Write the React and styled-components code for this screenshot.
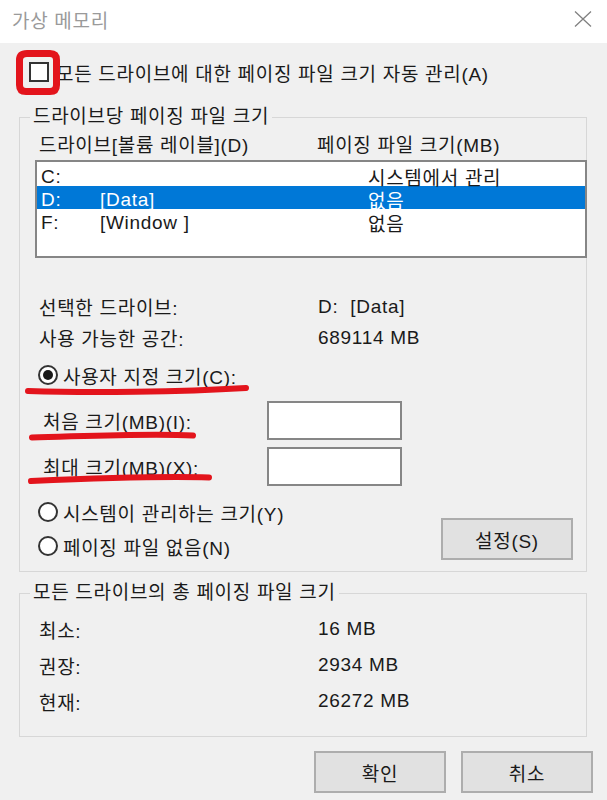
import React from 'react'
import styled, { createGlobalStyle } from 'styled-components'

const drives = [
  { letter: 'C:', label: '', size: '시스템에서 관리' },
  { letter: 'D:', label: '[Data]', size: '없음', selected: true },
  { letter: 'F:', label: '[Window ]', size: '없음' },
]

const totals = [
  ['최소:', '16 MB'],
  ['권장:', '2934 MB'],
  ['현재:', '26272 MB'],
]

function App() {
  return (
    <>
      <GlobalStyle />
      <Window>
        <TitleBar>
          <Title>가상 메모리</Title>
          <CloseIcon width="18" height="16" viewBox="0 0 18 16">
            <path d="M1 0.5 L17 15.5 M17 0.5 L1 15.5" />
          </CloseIcon>
        </TitleBar>

        <AutoRow>
          <CheckBox />
          <span>모든 드라이브에 대한 페이징 파일 크기 자동 관리(A)</span>
        </AutoRow>

        <GroupBox $top={18} $bottom={8}>
          <Legend>드라이브당 페이징 파일 크기</Legend>
          <ColumnHeader>
            <span>드라이브[볼륨 레이블](D)</span>
            <span>페이징 파일 크기(MB)</span>
          </ColumnHeader>
          <ListBox>
            {drives.map((d) => (
              <DriveRow key={d.letter} $selected={d.selected}>
                <span>{d.letter}</span>
                <span>{d.label}</span>
                <span>{d.size}</span>
              </DriveRow>
            ))}
          </ListBox>

          <InfoGrid $top={33} $row={31}>
            <span>선택한 드라이브:</span>
            <span>D:&nbsp;&nbsp;[Data]</span>
            <span>사용 가능한 공간:</span>
            <span>689114 MB</span>
          </InfoGrid>

          <RadioRow $top={7} $height={30}>
            <Radio $checked />
            <span>사용자 지정 크기(C):</span>
          </RadioRow>

          <SizeFields>
            <span>처음 크기(MB)(I):</span>
            <SizeInput />
            <span>최대 크기(MB)(X):</span>
            <SizeInput />
          </SizeFields>

          <ChoiceArea>
            <div>
              <RadioRow $height={34}>
                <Radio />
                <span>시스템이 관리하는 크기(Y)</span>
              </RadioRow>
              <RadioRow $height={34}>
                <Radio />
                <span>페이징 파일 없음(N)</span>
              </RadioRow>
            </div>
            <PushButton $bottom={3}>설정(S)</PushButton>
          </ChoiceArea>
        </GroupBox>

        <GroupBox $top={9} $bottom={17}>
          <Legend>모든 드라이브의 총 페이징 파일 크기</Legend>
          <InfoGrid $top={6} $row={36}>
            {totals.map(([k, v]) => (
              <React.Fragment key={k}>
                <span>{k}</span>
                <span>{v}</span>
              </React.Fragment>
            ))}
          </InfoGrid>
        </GroupBox>

        <Footer>
          <PushButton>확인</PushButton>
          <PushButton>취소</PushButton>
        </Footer>

        {/* red marker drawn over the screenshot */}
        <Marks width="607" height="800" viewBox="0 0 607 800">
          <path d="M27 53.5 L50 53.5 Q56.5 53.5 56.5 60 L56.5 85 Q56.5 91.5 50 91.5 L26 91.5 Q19.5 91.5 19.5 85 L19.5 60 Q19.5 53.5 27 53.5 Z" strokeWidth="7" />
          <path d="M28 391 C90 393 180 392 246 388" strokeWidth="6" />
          <path d="M32 437.5 C90 436 150 433 193 435.5" strokeWidth="6" />
          <path d="M31 481 C100 478 160 476 209 477.5" strokeWidth="6" />
        </Marks>
      </Window>
    </>
  )
}

export default App

const GlobalStyle = createGlobalStyle`
  html, body {
    margin: 0;
    padding: 0;
    background: #f0f0f0;
  }
  body {
    font-family: "Liberation Sans", "Noto Sans CJK KR", sans-serif;
  }
`

const Window = styled.div`
  position: relative;
  width: 607px;
  height: 800px;
  background: #f0f0f0;
  color: #1a1a1a;
  font-size: 19px;
  letter-spacing: 0.7px;
  overflow: hidden;
  display: flex;
  flex-direction: column;
`

const TitleBar = styled.div`
  flex: none;
  height: 43px;
  box-sizing: border-box;
  background: #fff;
  display: flex;
  align-items: center;
  justify-content: space-between;
  padding: 0 15px 5px 12px;
`

const Title = styled.span`
  color: #9a9a9a;
`

const CloseIcon = styled.svg`
  fill: none;
  stroke: #808080;
  stroke-width: 1.3;
`

const AutoRow = styled.div`
  display: flex;
  align-items: center;
  gap: 7px;
  height: 30px;
  margin: 14px 0 0 29px;
`

const CheckBox = styled.div`
  width: 20px;
  height: 20px;
  box-sizing: border-box;
  border: 2px solid #333;
  background: #fff;
`

const GroupBox = styled.fieldset`
  margin: ${(p) => p.$top}px 20px 0 19px;
  padding: 0 0 ${(p) => p.$bottom}px;
  border: 1px solid #d7d7d7;
  min-inline-size: auto;
`

const Legend = styled.legend`
  margin-left: 10px;
  padding: 0 3px;
  height: 24px;
  line-height: 24px;
`

const ColumnHeader = styled.div`
  display: grid;
  grid-template-columns: 278px 1fr;
  align-items: center;
  height: 28px;
  padding-left: 19px;
`

const ListBox = styled.div`
  margin: 3px 0 0 15px;
  width: 552px;
  height: 98px;
  box-sizing: border-box;
  border: 2px solid #868686;
  background: #fff;
  padding: 1px 0;
`

const DriveRow = styled.div`
  display: grid;
  grid-template-columns: 59px 268px 1fr;
  align-items: center;
  height: 23px;
  padding-left: 4px;
  background: ${(p) => (p.$selected ? '#0078d7' : 'transparent')};
  color: ${(p) => (p.$selected ? '#fff' : 'inherit')};
`

const InfoGrid = styled.div`
  margin-top: ${(p) => p.$top}px;
  padding-left: 19px;
  display: grid;
  grid-template-columns: 279px 1fr;
  grid-auto-rows: ${(p) => p.$row}px;
  align-items: center;
`

const RadioRow = styled.div`
  display: flex;
  align-items: center;
  gap: 5px;
  height: ${(p) => p.$height}px;
  margin-top: ${(p) => p.$top || 0}px;
  padding-left: 18px;
`

const Radio = styled.div`
  width: 20px;
  height: 20px;
  box-sizing: border-box;
  border: 2px solid #333;
  border-radius: 50%;
  background: #fff;
  display: flex;
  align-items: center;
  justify-content: center;

  &::after {
    content: '';
    display: ${(p) => (p.$checked ? 'block' : 'none')};
    width: 10px;
    height: 10px;
    border-radius: 50%;
    background: #1a1a1a;
  }
`

const SizeFields = styled.div`
  margin-top: 11px;
  padding-left: 23px;
  display: grid;
  grid-template-columns: 224px 135px;
  grid-auto-rows: 39px;
  row-gap: 7px;
  align-items: center;
`

const SizeInput = styled.div`
  height: 39px;
  box-sizing: border-box;
  border: 2px solid #868686;
  background: #fff;
`

const ChoiceArea = styled.div`
  margin-top: 9px;
  display: flex;
  justify-content: space-between;
  align-items: flex-end;
  padding-right: 13px;
`

const PushButton = styled.button`
  width: 132px;
  height: 42px;
  margin: 0 0 ${(p) => p.$bottom || 0}px;
  padding: 0;
  box-sizing: border-box;
  border: 2px solid #adadad;
  background: #e1e1e1;
  color: #1a1a1a;
  font: inherit;
  letter-spacing: inherit;
`

const Footer = styled.div`
  margin-top: 14px;
  display: flex;
  justify-content: flex-end;
  gap: 15px;
  padding-right: 14px;
`

const Marks = styled.svg`
  position: absolute;
  top: 0;
  left: 0;
  pointer-events: none;
  fill: none;
  stroke: #e3141c;
  stroke-linecap: round;
  stroke-linejoin: round;
`
